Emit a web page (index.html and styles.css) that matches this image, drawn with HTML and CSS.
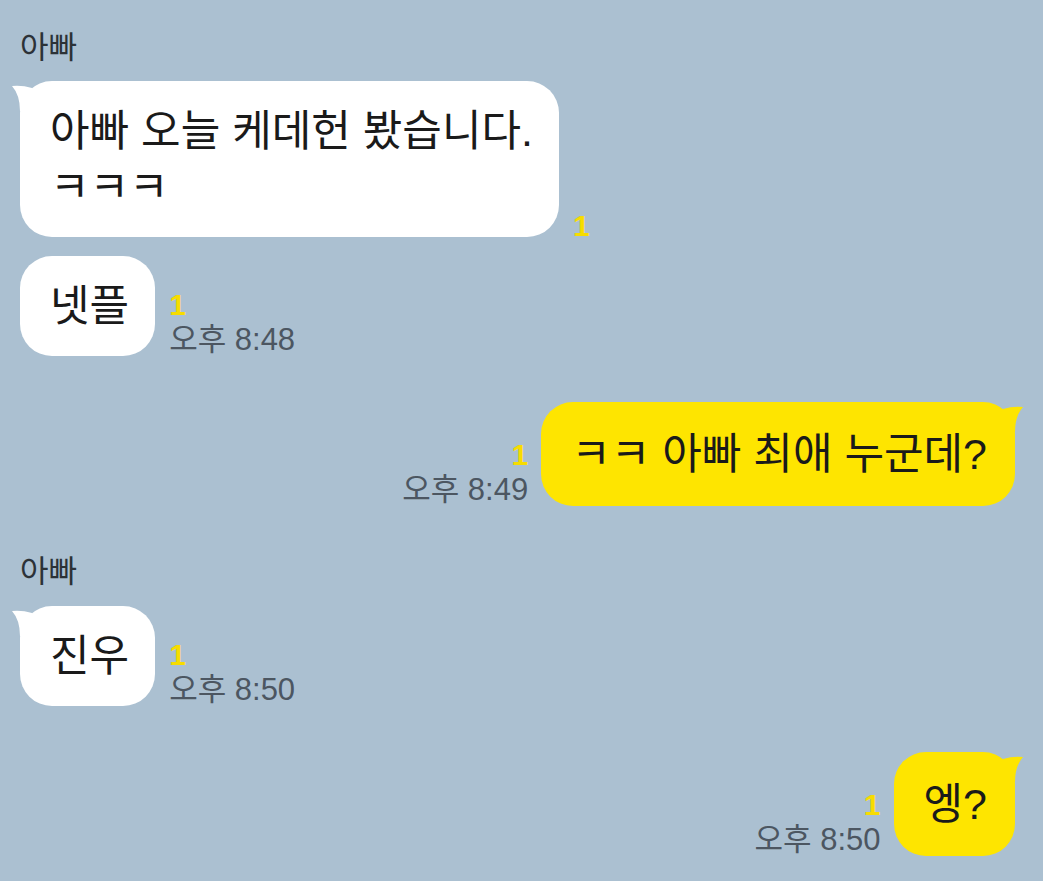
FILE: index.html
```html
<!DOCTYPE html>
<html lang="ko">
<head>
  <meta charset="UTF-8">
  <title>아빠</title>
  <link rel="stylesheet" href="styles.css">
</head>
<body>
  <div class="chat">

    <div class="group in">
      <div class="name">아빠</div>
      <div class="row">
        <div class="bubble">
          <svg class="tail" viewBox="0 0 24 32"><path d="M0 5 Q10 4 20 7 L20 30 L8 30 Q8 14 0 5 Z"/></svg>
          아빠 오늘 케데헌 봤습니다.<br>ㅋㅋㅋ
        </div>
        <div class="meta single"><span class="unread">1</span></div>
      </div>
      <div class="row">
        <div class="bubble">넷플</div>
        <div class="meta"><span class="unread">1</span><span class="time">오후 8:48</span></div>
      </div>
    </div>

    <div class="group out">
      <div class="row">
        <div class="meta"><span class="unread">1</span><span class="time">오후 8:49</span></div>
        <div class="bubble">
          <svg class="tail" viewBox="0 0 24 32"><path d="M0 5 Q10 4 20 7 L20 30 L8 30 Q8 14 0 5 Z"/></svg>
          ㅋㅋ 아빠 최애 누군데?
        </div>
      </div>
    </div>

    <div class="group in">
      <div class="name">아빠</div>
      <div class="row">
        <div class="bubble">
          <svg class="tail" viewBox="0 0 24 32"><path d="M0 5 Q10 4 20 7 L20 30 L8 30 Q8 14 0 5 Z"/></svg>
          진우
        </div>
        <div class="meta"><span class="unread">1</span><span class="time">오후 8:50</span></div>
      </div>
    </div>

    <div class="group out">
      <div class="row">
        <div class="meta"><span class="unread">1</span><span class="time">오후 8:50</span></div>
        <div class="bubble">
          <svg class="tail" viewBox="0 0 24 32"><path d="M0 5 Q10 4 20 7 L20 30 L8 30 Q8 14 0 5 Z"/></svg>
          엥?
        </div>
      </div>
    </div>

  </div>
</body>
</html>
```

FILE: styles.css
```css
* {
  margin: 0; padding: 0; box-sizing: border-box;
  font-family: "Liberation Sans", "Noto Sans CJK KR", sans-serif;
}
body {
  background: #abc0d1;
  height: 100vh;
  overflow: hidden;
}
.chat {
  display: flex;
  flex-direction: column;
  gap: 46px;
  padding: 28px 28px 0 20px;
}
.group {
  display: flex;
  flex-direction: column;
  gap: 19px;
}
.name {
  font-size: 31px;
  line-height: 40px;
  color: #2c3237;
  margin-bottom: -5px;
}
.group:first-child .name {
  margin-bottom: -6px;
}
.row {
  display: flex;
  align-items: flex-end;
  gap: 14px;
}
.out .row {
  justify-content: flex-end;
  gap: 13px;
}
.bubble {
  position: relative;
  background: #fff;
  color: #1a1a1a;
  font-size: 43px;
  line-height: 56px;
  padding: 22px 26px 22px 30px;
  border-radius: 32px;
}
.out .bubble {
  background: #fee500;
  padding: 24px 28px 24px 30px;
}
.tail {
  position: absolute;
  top: 0;
  left: -8px;
  width: 24px;
  height: 32px;
  fill: #fff;
}
.out .tail {
  left: auto;
  right: -8px;
  transform: scaleX(-1);
  fill: #fee500;
}
.meta {
  display: flex;
  flex-direction: column;
  margin-bottom: -1px;
}
.out .meta {
  align-items: flex-end;
}
.meta.single {
  margin-bottom: -6px;
}
.unread {
  font-size: 30px;
  line-height: 35px;
  font-weight: bold;
  color: #f7dc00;
}
.time {
  font-size: 31px;
  line-height: 35px;
  color: #4c5661;
}
```
